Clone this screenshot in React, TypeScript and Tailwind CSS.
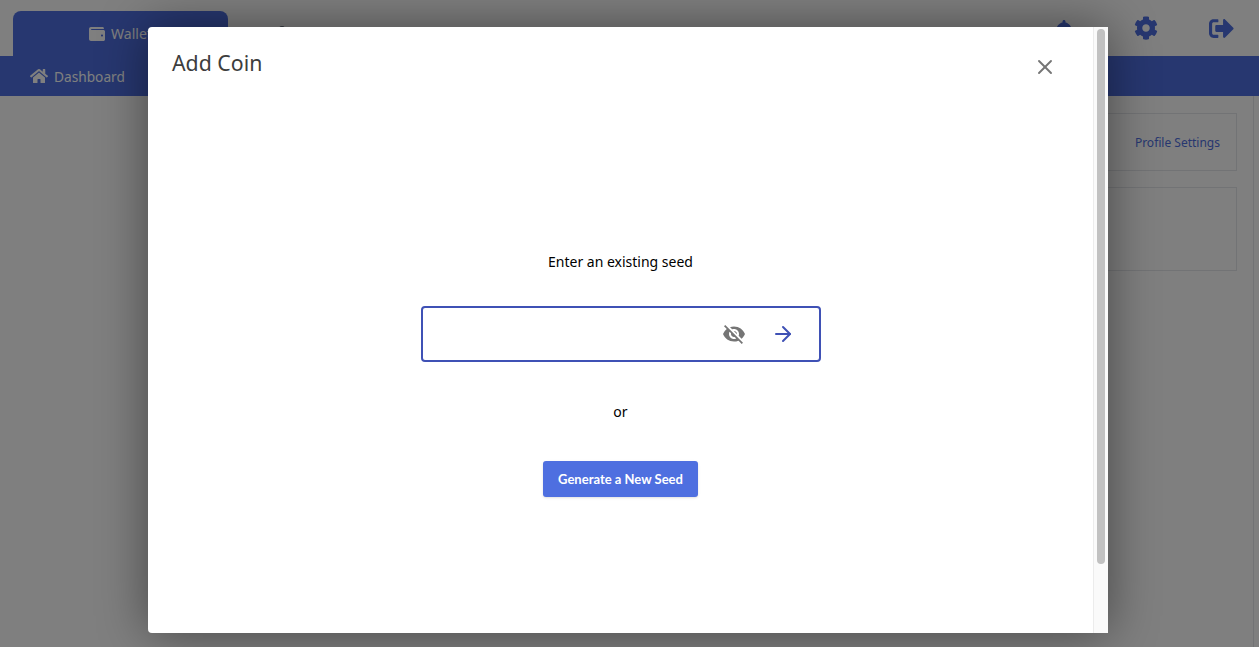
import { ArrowRight, X } from 'lucide-react';
import { FaBell, FaCog, FaHome, FaSignOutAlt, FaUser, FaWallet } from 'react-icons/fa';
import { MdVisibilityOff } from 'react-icons/md';

const App = () => {
  return (
    <div className="relative h-[647px] w-[1259px] overflow-hidden bg-white font-['Noto_Sans',sans-serif]">
      {/* page behind the modal */}
      <div className="flex h-14 items-end justify-between pl-[13px] pr-[25px]">
        <div className="flex items-end">
          <div className="flex h-[45px] w-[215px] items-center justify-center gap-1.5 rounded-t-lg bg-[#4e6fe0] text-sm text-white">
            <FaWallet className="h-4 w-4" />
            Wallet
          </div>
          <div className="ml-[46px] flex h-[45px] items-center">
            <FaUser className="h-4 w-4 text-gray-500" />
          </div>
        </div>
        <div className="flex h-14 items-center text-[#4e6fe0]">
          <FaBell className="mt-[8px] h-6 w-6" />
          <FaCog className="ml-[58px] h-6 w-6" />
          <FaSignOutAlt className="ml-[51px] h-[25px] w-[25px]" />
        </div>
      </div>
      <div className="flex h-10 items-center bg-[#4e6fe0] pl-[30px] text-[13.7px] text-white">
        <FaHome className="mr-1.5 h-[18px] w-[18px]" />
        <span className="pt-[2px]">Dashboard</span>
      </div>
      <div className="mr-[5px] flex h-[551px] flex-col items-end gap-4 border-r border-gray-200 pr-[16px] pt-[17px]">
        <div className="flex h-[58px] w-[400px] items-center justify-end border border-gray-200 pr-4 pt-0.5 text-xs text-[#4e6fe0]">
          Profile Settings
        </div>
        <div className="h-[84px] w-[400px] border border-gray-200" />
      </div>

      {/* modal */}
      <div className="absolute inset-0 bg-black/50 pl-[148px] pt-[27px]">
        <div className="flex h-[606px] w-[960px] rounded-sm bg-white shadow-[0_0_50px_rgba(0,0,0,0.45)]">
          <div className="flex flex-1 flex-col">
            <div className="flex h-9 items-start justify-between pl-6 pr-[36px] pt-[18px]">
              <h2 className="text-[21.3px] leading-[36px] text-[#3d3d3d]">Add Coin</h2>
              <X className="mt-[10px] h-6 w-6 text-[#757575]" strokeWidth={1.9} />
            </div>
            <div className="flex flex-col items-center pt-[188px]">
              <p className="pt-px text-sm leading-5 text-black">Enter an existing seed</p>
              <div className="mt-[34px] flex h-14 w-[400px] items-center justify-end rounded border-2 border-[#3f51b5] pr-6">
                <MdVisibilityOff className="h-6 w-6 text-[#757575]" />
                <ArrowRight className="ml-[25px] h-6 w-6 text-[#3f51b5]" strokeWidth={2} />
              </div>
              <p className="mt-[40px] text-sm leading-5 text-black">or</p>
              <button className="mt-[39px] h-9 w-[155px] rounded-[3px] bg-[#4e6fe0] pt-px font-['Lato',sans-serif] text-[13px] font-bold text-white shadow-sm">
                Generate a New Seed
              </button>
            </div>
          </div>
          <div className="w-[15px] border-l border-[#ececec] bg-[#fafafa] pl-[3px] pt-[2px]">
            <div className="h-[535px] w-2 rounded-full bg-[#c1c1c1]" />
          </div>
        </div>
      </div>
    </div>
  );
};

export default App;
